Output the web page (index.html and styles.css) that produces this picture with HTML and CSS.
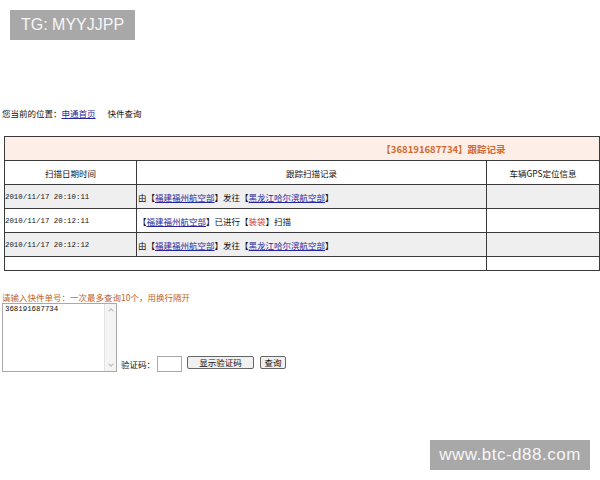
FILE: index.html
```html
<!DOCTYPE html>
<html lang="zh-CN">
<head>
  <meta charset="UTF-8" />
  <title>快件查询</title>
  <link rel="stylesheet" href="styles.css">
</head>
<body>
  <div class="mark markTop">TG: MYYJJPP</div>

  <div class="crumb">
    您当前的位置：<a href="#">申通首页</a><span class="here">快件查询</span>
  </div>

  <table class="track">
    <tr class="titleRow">
      <td colspan="3"><span class="titleText">【368191687734】跟踪记录</span></td>
    </tr>
    <tr class="headRow">
      <td class="colDate">扫描日期时间</td>
      <td class="colInfo">跟踪扫描记录</td>
      <td class="colGps">车辆GPS定位信息</td>
    </tr>
    <tr class="grey">
      <td class="date">2010/11/17 20:10:11</td>
      <td>由【<a href="#">福建福州航空部</a>】发往【<a href="#">黑龙江哈尔滨航空部</a>】</td>
      <td></td>
    </tr>
    <tr>
      <td class="date">2010/11/17 20:12:11</td>
      <td>【<a href="#">福建福州航空部</a>】已进行【<span class="red">装袋</span>】扫描</td>
      <td></td>
    </tr>
    <tr class="grey">
      <td class="date">2010/11/17 20:12:12</td>
      <td>由【<a href="#">福建福州航空部</a>】发往【<a href="#">黑龙江哈尔滨航空部</a>】</td>
      <td></td>
    </tr>
    <tr class="emptyRow">
      <td colspan="2"></td>
      <td></td>
    </tr>
  </table>

  <div class="queryTip">请输入快件单号：一次最多查询10个，用换行隔开</div>
  <div class="queryForm">
    <div class="numbers">
      <textarea id="billNo">368191687734</textarea>
      <div class="scroll"><span class="arrow up"></span><span class="arrow down"></span></div>
    </div>
    <span class="codeLabel">验证码：</span>
    <input type="text" class="codeInput" />
    <button class="btn btnShow">显示验证码</button>
    <button class="btn btnQuery">查询</button>
  </div>

  <div class="mark markBottom">www.btc-d88.com</div>
</body>
</html>
```

FILE: styles.css
```css
/* old-style tracking page, small type */
body {
  margin: 0;
  background: #fff; color: #111;
  font-family: "Noto Sans CJK SC", "Liberation Sans", sans-serif;
  font-size: 8.5px;
  min-height: 480px;
}
a {
  color: #26269a;
}

/* watermarks sit over the page */
.mark {
  position: absolute;
  background: #a8a8a8;
  color: #f6f6f6;
  font-family: "Liberation Sans", sans-serif;
  height: 30px; line-height: 30px;
  text-align: center;
}
.markTop {
  left: 10px; top: 10px;
  width: 125px;
  font-size: 16px;
}
.markBottom {
  left: 430px; top: 440px;
  width: 160px;
  font-size: 17px;
  letter-spacing: 0.5px;
}

.crumb {
  padding: 107px 0 0 2px;
  height: 12px; line-height: 12px;
}
.crumb .here {
  margin-left: 12px;
}

.track {
  margin: 17px 0 0 4px;
  width: 596px;
  border-collapse: collapse;
  line-height: 12px;
}
.track td {
  border: 1px solid #3a3a3a;
  padding: 0;
  height: 23px;
}
.titleRow td {
  background: #fdeee8;
  text-align: center;
}
.titleText {
  color: #d2692e;
  font-weight: bold;
  font-size: 9.5px;
}
.headRow td {
  text-align: center;
}
.colDate { width: 131px; }
.colGps { width: 112px; }
.grey td {
  background: #efefef;
}
.track td.date {
  font-family: "Liberation Mono", monospace;
  font-size: 7.4px;
}
.track td + td {
  padding-left: 1px;
}
.headRow td + td {
  padding-left: 0;
}
.track .titleRow td { padding-left: 283px; }
.track .emptyRow td {
  height: 13px;
}
.red {
  color: #c8302a;
}

.queryTip {
  margin: 20px 0 0 2px;
  color: #c0642a;
  height: 12px; line-height: 12px;
}
.queryForm {
  display: flex;
  align-items: flex-end;
  margin: 0 0 0 2px;
}
.numbers {
  display: flex;
  width: 113px; height: 67px;
  border: 1px solid #a9a9a9;
}
.numbers textarea {
  flex: 1;
  border: none; outline: none; resize: none;
  padding: 1px 2px; margin: 0;
  font-family: "Liberation Mono", monospace;
  font-size: 7.4px;
  color: #111;
  overflow: hidden;
}
.scroll {
  width: 11px;
  background: #f4f4f4;
  border-left: 1px solid #e2e2e2;
  display: flex; flex-direction: column; justify-content: space-between;
  align-items: center;
  padding: 3px 0;
}
.arrow {
  width: 3px; height: 3px;
  border-left: 1px solid #b8b8b8;
  border-top: 1px solid #b8b8b8;
}
.arrow.up { transform: rotate(45deg); margin-top: 2px; }
.arrow.down { transform: rotate(225deg); margin-bottom: 2px; }

.codeLabel {
  margin-left: 4px;
  line-height: 12px;
  margin-bottom: 2px;
}
.codeInput {
  width: 23px; height: 14px;
  margin: 0 0 0 2px; padding: 0;
  border: 1px solid #a9a9a9;
}
.btn {
  height: 13px;
  margin: 0 0 3px 5px; padding: 0;
  background: #f0f0f0;
  border: 1px solid #666;
  border-radius: 2px;
  font-family: "Noto Sans CJK SC", sans-serif;
  font-size: 8.5px; line-height: 11px;
  color: #111;
}
.btnShow { width: 67px; }
.btnQuery { width: 26px; margin-left: 6px; }
```
